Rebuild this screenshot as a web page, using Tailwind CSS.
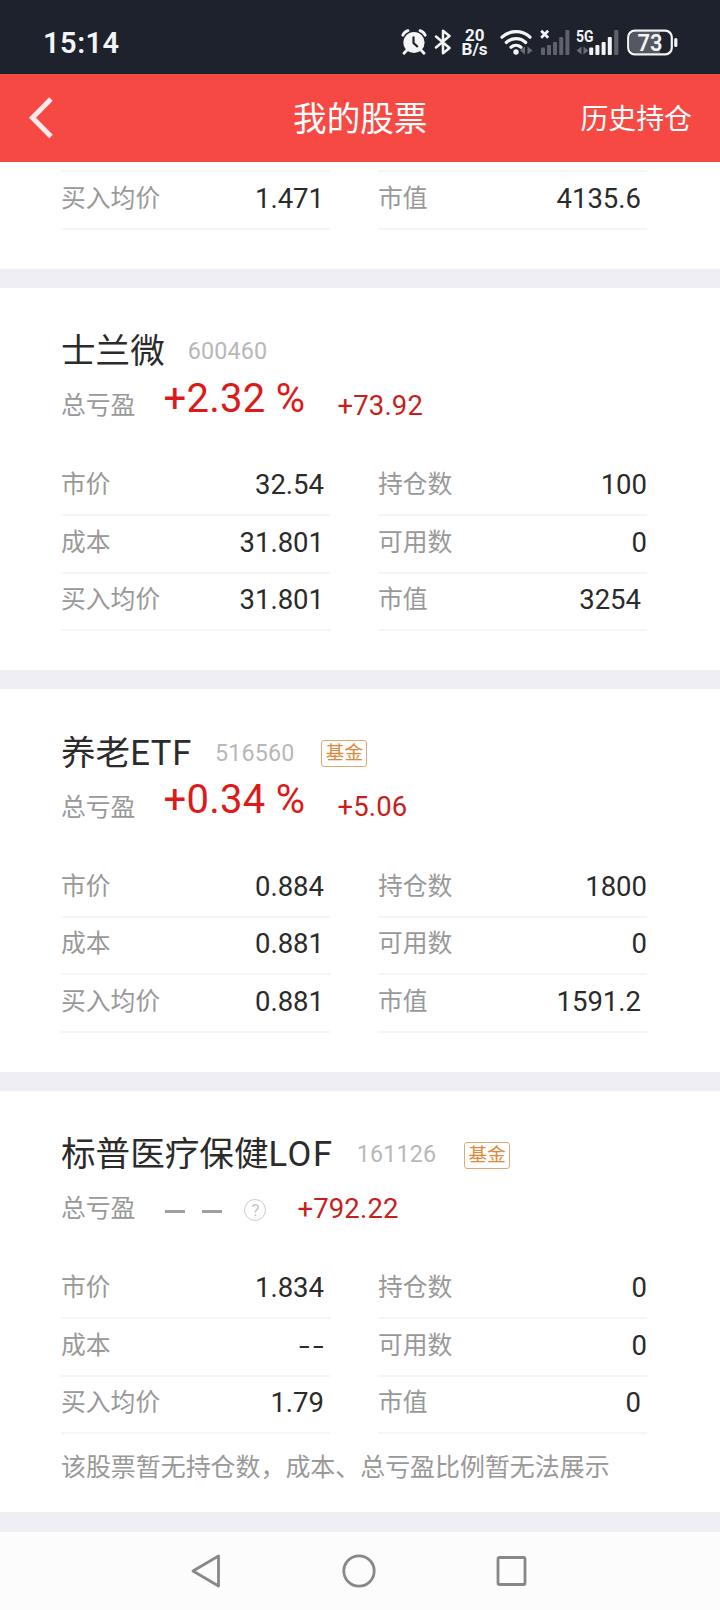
<!DOCTYPE html>
<html lang="zh-CN">
<head>
    <meta charset="UTF-8">
    <meta name="viewport" content="width=device-width, initial-scale=1.0">
    <title>我的股票</title>
    <script src="https://cdn.jsdelivr.net/npm/@tailwindcss/browser@4"></script>
</head>

<body class="w-[720px] h-[1610px] overflow-hidden bg-white font-[Roboto,'Noto_Sans_CJK_SC',sans-serif] text-[#2b2b2b]">

  <!-- status bar -->
  <div class="h-[74px] bg-[#1e222c] flex items-center text-[#f2f4f5] pl-[43px] pt-2.5">
    <span class="w-[358px] pt-0.5 text-[29px] leading-none font-semibold tracking-[0.5px]">15:14</span>
    <svg class="w-[26px] h-[26px]" viewBox="0 0 26 26" fill="none">
      <circle cx="13" cy="13.5" r="10.6" fill="currentColor"/>
      <path d="M1.8 6.2A8 8 0 0 1 7 1.6M24.2 6.2A8 8 0 0 0 19 1.6M6 21l-3 3.2M20 21l3 3.2" stroke="currentColor" stroke-width="2.8" stroke-linecap="round"/>
      <path d="M12.5 7.5V14l4.3 4" stroke="#1e222c" stroke-width="2.2"/>
    </svg>
    <svg class="w-[18px] h-[26px] ml-[7px]" viewBox="0 0 18 26" fill="none" stroke="currentColor" stroke-width="2.5" stroke-linejoin="round" stroke-linecap="round">
      <path d="M2 7.5L15.5 19 9 24.3V1.7L15.5 7 2 18.5"/>
    </svg>
    <svg class="w-[28px] h-[28px] ml-[9px] overflow-visible" viewBox="0 0 28 28" fill="currentColor" font-size="16.5" font-weight="700">
      <text x="4" y="12.5" textLength="19.5" lengthAdjust="spacingAndGlyphs">20</text>
      <text x="0.5" y="26.5" textLength="26" lengthAdjust="spacingAndGlyphs">B/s</text>
    </svg>
    <svg class="w-[33px] h-[27px] ml-[11px]" viewBox="0 0 33 27" fill="none">
      <path d="M2 8.2a20.5 20.5 0 0 1 28 0M6.3 13.5a14 14 0 0 1 19.4 0M11 18.3a7.6 7.6 0 0 1 10 0" stroke="currentColor" stroke-width="3.2" stroke-linecap="round"/>
      <circle cx="16" cy="23" r="2.7" fill="currentColor"/>
      <path d="M25 17.5v8l-5-4zM27.5 17.5v8l5-4z" fill="#6a6d75"/>
    </svg>
    <svg class="w-[30px] h-[27px] ml-[7px]" viewBox="0 0 30 27" fill="none">
      <path d="M1.2 1.8l7 7M8.2 1.8l-7 7" stroke="currentColor" stroke-width="2.7"/>
      <g fill="#5f626b">
        <rect x="1" y="18.5" width="4" height="7.5" rx="1"/>
        <rect x="7" y="16" width="4" height="10" rx="1"/>
        <rect x="13" y="13" width="4" height="13" rx="1"/>
        <rect x="19.2" y="8" width="4" height="18" rx="1"/>
        <rect x="25.4" y="1" width="4" height="25" rx="1"/>
      </g>
    </svg>
    <svg class="w-[44px] h-[27px] ml-[6px] overflow-visible" viewBox="0 0 44 27" fill="none">
      <text x="0" y="13" font-size="16.5" font-weight="700" textLength="17.5" lengthAdjust="spacingAndGlyphs" fill="currentColor">5G</text>
      <path d="M5.5 17.5v8l-5-4zM7.5 17.5v8l5-4z" fill="#6a6d75"/>
      <g fill="currentColor">
        <rect x="13.2" y="18.5" width="4" height="7.5" rx="1"/>
        <rect x="19.4" y="16" width="4" height="10" rx="1"/>
        <rect x="25.6" y="13" width="4" height="13" rx="1"/>
        <rect x="31.8" y="8" width="4" height="18" rx="1"/>
      </g>
      <rect x="38.2" y="1" width="4.2" height="25" rx="1" fill="#5f626b"/>
    </svg>
    <svg class="w-[52px] h-[27px] ml-[7px]" viewBox="0 0 52 27" fill="none">
      <path d="M8 3h25v21H8a5 5 0 0 1-5-5V8a5 5 0 0 1 5-5z" fill="#555861"/>
      <rect x="1.2" y="1.7" width="43.6" height="23.6" rx="6.5" stroke="currentColor" stroke-width="2.2"/>
      <rect x="47.2" y="9" width="3.2" height="9" rx="1.5" fill="currentColor"/>
      <text x="10.5" y="21.5" font-size="23" font-weight="600" textLength="25" lengthAdjust="spacingAndGlyphs" fill="currentColor">73</text>
    </svg>
  </div>

  <!-- title bar -->
  <header class="h-[88px] bg-[#f64944] flex items-center justify-between pl-[28px] pr-[28px] text-white">
    <div class="w-[112px]">
      <svg class="w-[26px] h-[42px]" viewBox="0 0 26 42" fill="none">
        <path d="M23 2L4.5 20.7 23 39.5" stroke="#ffeceb" stroke-width="5"/>
      </svg>
    </div>
    <h1 class="pt-1 text-[33.6px] leading-none">我的股票</h1>
    <a class="pt-1 text-[27.9px] leading-none">历史持仓</a>
  </header>

  <main class="bg-white">
    <!-- tail of the previous holding -->
    <section class="h-[107px] px-[61px] pt-2">
      <div class="flex gap-12">
        <div class="w-[269px] h-[60px] border-y-2 border-[#f5f5f5] flex items-center justify-between pb-0.5 pr-1.5">
          <span class="text-[24.8px] text-[#999]">买入均价</span><span class="text-[27.5px]">1.471</span>
        </div>
        <div class="w-[269px] h-[60px] border-y-2 border-[#f5f5f5] flex items-center justify-between pb-0.5 pr-1.5">
          <span class="text-[24.8px] text-[#999]">市值</span><span class="text-[27.5px]">4135.6</span>
        </div>
      </div>
    </section>
    <div class="h-[19px] bg-[#efeef4]"></div>

    <section class="h-[382px] px-[61px] pt-[38px]">
      <div class="h-[50px] flex items-center">
        <h2 class="text-[34.6px] leading-[50px]">士兰微</h2>
        <span class="ml-[23px] text-[23.3px] tracking-[0.15px] text-[#b8b8b8]">600460</span>
      </div>
      <div class="h-[82px] flex items-start">
        <span class="mt-[12px] text-[24.8px] leading-[36px] text-[#999]">总亏盈</span>
        <span class="ml-[28px] -mt-px text-[40px] leading-[48px] tracking-[0.3px] text-[#dc1a1a]">+2.32 %</span>
        <span class="ml-[32px] mt-[12px] text-[27.5px] leading-[36px] tracking-[0.15px] text-[#c81e1e]">+73.92</span>
      </div>
      <div class="flex gap-12">
        <div class="w-[269px]">
          <div class="h-[58px] border-b-2 border-[#f5f5f5] flex items-center justify-between pb-0.5 pr-1.5">
            <span class="text-[24.8px] text-[#999]">市价</span><span class="text-[27.5px]">32.54</span>
          </div>
          <div class="h-[58px] border-b-2 border-[#f5f5f5] flex items-center justify-between pb-0.5 pr-1.5">
            <span class="text-[24.8px] text-[#999]">成本</span><span class="text-[27.5px]">31.801</span>
          </div>
          <div class="h-[57px] border-b-2 border-[#f5f5f5] flex items-center justify-between pb-1 pr-1.5">
            <span class="text-[24.8px] text-[#999]">买入均价</span><span class="text-[27.5px]">31.801</span>
          </div>
        </div>
        <div class="w-[269px]">
          <div class="h-[58px] border-b-2 border-[#f5f5f5] flex items-center justify-between pb-0.5">
            <span class="text-[24.8px] text-[#999]">持仓数</span><span class="text-[27.5px]">100</span>
          </div>
          <div class="h-[58px] border-b-2 border-[#f5f5f5] flex items-center justify-between pb-0.5">
            <span class="text-[24.8px] text-[#999]">可用数</span><span class="text-[27.5px]">0</span>
          </div>
          <div class="h-[57px] border-b-2 border-[#f5f5f5] flex items-center justify-between pb-1 pr-1.5">
            <span class="text-[24.8px] text-[#999]">市值</span><span class="text-[27.5px]">3254</span>
          </div>
        </div>
      </div>
    </section>
    <div class="h-[19px] bg-[#efeef4]"></div>

    <section class="h-[383px] px-[61px] pt-[39px]">
      <div class="h-[50px] flex items-center">
        <h2 class="text-[34.6px] leading-[50px]">养老<span class="tracking-[0.7px]">ETF</span></h2>
        <span class="ml-[23px] text-[23.3px] tracking-[0.15px] text-[#b8b8b8]">516560</span>
        <span class="ml-[27px] w-[46px] h-[27px] border border-[#e0a878] rounded-[3px] text-center text-[18.6px] leading-[25px] text-[#e0883a]">基金</span>
      </div>
      <div class="h-[82px] flex items-start">
        <span class="mt-[12px] text-[24.8px] leading-[36px] text-[#999]">总亏盈</span>
        <span class="ml-[28px] -mt-[2px] text-[40px] leading-[48px] tracking-[0.3px] text-[#dc1a1a]">+0.34 %</span>
        <span class="ml-[32px] mt-[11px] text-[27.5px] leading-[36px] tracking-[0.15px] text-[#c81e1e]">+5.06</span>
      </div>
      <div class="flex gap-12">
        <div class="w-[269px]">
          <div class="h-[58px] border-b-2 border-[#f5f5f5] flex items-center justify-between pb-0.5 pr-1.5">
            <span class="text-[24.8px] text-[#999]">市价</span><span class="text-[27.5px]">0.884</span>
          </div>
          <div class="h-[57px] border-b-2 border-[#f5f5f5] flex items-center justify-between pb-1 pr-1.5">
            <span class="text-[24.8px] text-[#999]">成本</span><span class="text-[27.5px]">0.881</span>
          </div>
          <div class="h-[58px] border-b-2 border-[#f5f5f5] flex items-center justify-between pb-0.5 pr-1.5">
            <span class="text-[24.8px] text-[#999]">买入均价</span><span class="text-[27.5px]">0.881</span>
          </div>
        </div>
        <div class="w-[269px]">
          <div class="h-[58px] border-b-2 border-[#f5f5f5] flex items-center justify-between pb-0.5">
            <span class="text-[24.8px] text-[#999]">持仓数</span><span class="text-[27.5px]">1800</span>
          </div>
          <div class="h-[57px] border-b-2 border-[#f5f5f5] flex items-center justify-between pb-1">
            <span class="text-[24.8px] text-[#999]">可用数</span><span class="text-[27.5px]">0</span>
          </div>
          <div class="h-[58px] border-b-2 border-[#f5f5f5] flex items-center justify-between pb-0.5 pr-1.5">
            <span class="text-[24.8px] text-[#999]">市值</span><span class="text-[27.5px]">1591.2</span>
          </div>
        </div>
      </div>
    </section>
    <div class="h-[19px] bg-[#efeef4]"></div>

    <section class="h-[421px] px-[61px] pt-[38px]">
      <div class="h-[50px] flex items-center">
        <h2 class="text-[34.6px] leading-[50px]">标普医疗保健<span class="tracking-[1.6px]">LOF</span></h2>
        <span class="ml-[23px] text-[23.3px] tracking-[0.15px] text-[#b8b8b8]">161126</span>
        <span class="ml-[28px] w-[46px] h-[27px] mt-0.5 border border-[#e0a878] rounded-[3px] text-center text-[18.6px] leading-[25px] text-[#e0883a]">基金</span>
      </div>
      <div class="h-[82px] flex items-start">
        <span class="mt-[12px] text-[24.8px] leading-[36px] text-[#999]">总亏盈</span>
        <div class="ml-[30px] mt-[31px] flex gap-[17px]">
          <span class="w-[20px] h-[2.5px] bg-[#a0a0a0]"></span>
          <span class="w-[20px] h-[2.5px] bg-[#a0a0a0]"></span>
        </div>
        <span class="ml-[22px] mt-[20px] w-[22px] h-[22px] border border-[#ccc] rounded-full text-center text-[17px] leading-[21px] text-[#c4c4c4]">?</span>
        <span class="ml-[31px] mt-[12px] text-[27.5px] leading-[36px] tracking-[0.15px] text-[#c81e1e]">+792.22</span>
      </div>
      <div class="flex gap-12">
        <div class="w-[269px]">
          <div class="h-[58px] border-b-2 border-[#f5f5f5] flex items-center justify-between pb-0.5 pr-1.5">
            <span class="text-[24.8px] text-[#999]">市价</span><span class="text-[27.5px]">1.834</span>
          </div>
          <div class="h-[58px] border-b-2 border-[#f5f5f5] flex items-center justify-between pb-0.5 pr-[3px]">
            <span class="text-[24.8px] text-[#999]">成本</span>
            <!-- placeholder while there is no cost -->
            <span class="inline-block origin-right scale-x-[1.4] text-[27.5px] tracking-[2.4px]">--</span>
          </div>
          <div class="h-[57px] border-b-2 border-[#f5f5f5] flex items-center justify-between pb-1 pr-1.5">
            <span class="text-[24.8px] text-[#999]">买入均价</span><span class="text-[27.5px]">1.79</span>
          </div>
        </div>
        <div class="w-[269px]">
          <div class="h-[58px] border-b-2 border-[#f5f5f5] flex items-center justify-between pb-0.5">
            <span class="text-[24.8px] text-[#999]">持仓数</span><span class="text-[27.5px]">0</span>
          </div>
          <div class="h-[58px] border-b-2 border-[#f5f5f5] flex items-center justify-between pb-0.5">
            <span class="text-[24.8px] text-[#999]">可用数</span><span class="text-[27.5px]">0</span>
          </div>
          <div class="h-[57px] border-b-2 border-[#f5f5f5] flex items-center justify-between pb-1 pr-1.5">
            <span class="text-[24.8px] text-[#999]">市值</span><span class="text-[27.5px]">0</span>
          </div>
        </div>
      </div>
      <p class="mt-[16px] text-[24.95px] leading-[36px] text-[#999] whitespace-nowrap">该股票暂无持仓数，成本、总亏盈比例暂无法展示</p>
    </section>
    <div class="h-[20px] bg-[#efeef4]"></div>
  </main>

  <!-- system navigation -->
  <nav class="h-[78px] bg-[#fcfcfc] flex items-center justify-between pl-[190px] pr-[192px]">
    <svg class="w-[32px] h-[36px]" viewBox="0 0 32 36" fill="none" stroke="#888" stroke-width="2.8" stroke-linejoin="round">
      <path d="M28.5 3v30L3 18z"/>
    </svg>
    <svg class="w-[36px] h-[36px]" viewBox="0 0 36 36" fill="none" stroke="#888" stroke-width="2.8">
      <circle cx="18" cy="18" r="15.2"/>
    </svg>
    <svg class="w-[32px] h-[36px]" viewBox="0 0 32 36" fill="none" stroke="#888" stroke-width="2.8">
      <rect x="2" y="4.5" width="27" height="27" rx="1.5"/>
    </svg>
  </nav>
</body>
</html>
